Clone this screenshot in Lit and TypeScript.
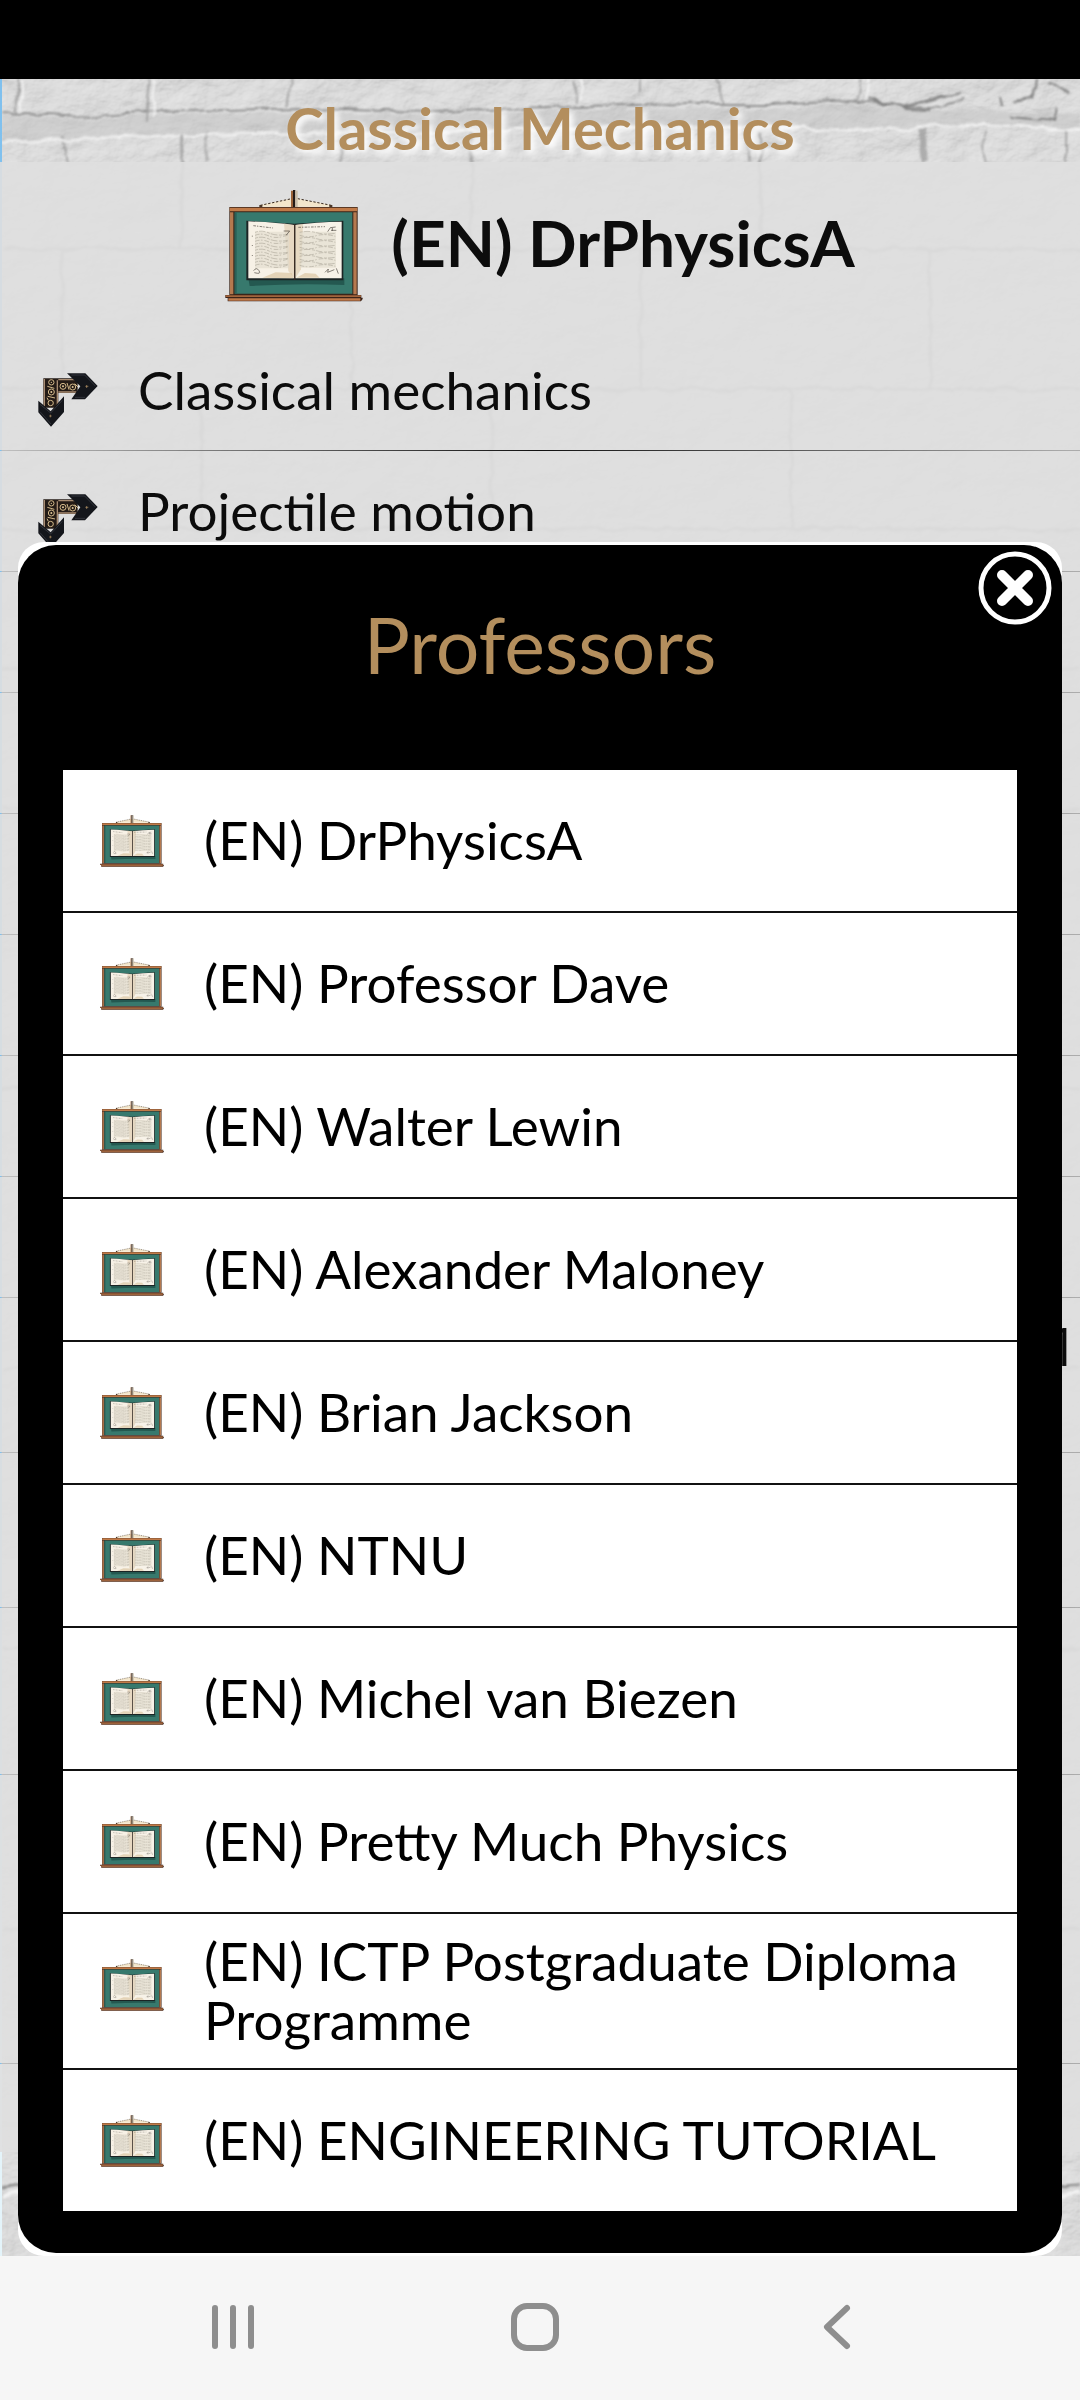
import { LitElement, html, css, svg } from "lit";
import { customElement, property } from "lit/decorators.js";

/** Weathered white brick wall behind the page. */
@customElement("brick-wall")
export class BrickWall extends LitElement {
  static styles = css`
    :host { display: block; overflow: hidden; }
    svg { display: block; width: 100%; height: 100%; }
  `;

  render() {
    return html`<svg viewBox="0 0 1080 2177" preserveAspectRatio="none" aria-hidden="true">
      <defs>
        <filter id="plaster" x="0" y="0" width="100%" height="100%">
          <feTurbulence type="fractalNoise" baseFrequency="0.022 0.03" numOctaves="5" seed="7" result="n" />
          <feDiffuseLighting in="n" surfaceScale="3" diffuseConstant="1.1" lighting-color="#dadada">
            <feDistantLight azimuth="235" elevation="66" />
          </feDiffuseLighting>
        </filter>
        <filter id="rough" x="-2%" y="-2%" width="104%" height="104%">
          <feTurbulence type="fractalNoise" baseFrequency="0.05" numOctaves="4" seed="3" />
          <feDisplacementMap in="SourceGraphic" scale="8" xChannelSelector="R" yChannelSelector="G" />
          <feGaussianBlur stdDeviation="0.8" />
        </filter>
      </defs>
      <rect width="1080" height="2177" fill="#d6d6d6" />
      <rect width="1080" height="2177" filter="url(#plaster)" />
      <g filter="url(#rough)" fill="none">
        <path d="M0 36 85 41 150 36 300 33 430 36 580 31 690 30 770 30 850 25 905 30 960 30 1080 34V52L980 44 870 49 780 48 600 46 430 52 240 52 120 56 0 62Z" fill="#bcbcbc" opacity=".4" />
        <path d="M0 34 85 38 150 33 300 29 430 32 580 27 690 25 770 25 850 21 905 27 930 28 965 20" stroke="#808080" stroke-width="2" opacity=".8" />
        <path d="M868 20 905 29 930 30M905 27 960 13M1036 0 1032 19 1012 22M1010 38 1055 42 1058 28M1000 18 1002 27M1048 6 1070 14" stroke="#6c6c6c" stroke-width="2" opacity=".8" />
        <path d="M16 0V34M148 0 144 42M290 0 286 27M570 0 576 24M640 0V12M716 0 722 24M860 0 857 22M60 56 65 83M205 52V83M340 60V83M745 55 750 83M985 50V83M1066 52V83" stroke="#929292" stroke-width="2" opacity=".7" />
        <path d="M922 48 925 83" stroke="#8d8d8d" stroke-width="7" opacity=".6" />
        <path d="M0 64 120 58 240 55 430 54 600 48 780 49 870 52 980 44 1080 52M20 0V32M152 0V38M868 0 866 20M580 0V22" stroke="#f2f2f2" stroke-width="2" />
        <path d="M0 170H1080M0 310H1080M0 450H1080M0 590H1080M0 730H1080M0 1010H1080M0 1290H1080M0 1570H1080M0 1850H1080M180 55V170M470 55V170M760 55V170M60 170V310M350 170V310M640 170V310M930 170V310M200 310V450M490 310V450M790 310V450" stroke="#858585" stroke-width="3" opacity=".6" />
        <path d="M0 2110 30 2104M1058 2108 1080 2106" stroke="#8a8a8a" stroke-width="3" />
        <path d="M0 2118 30 2112M1058 2118 1080 2114" stroke="#f2f2f2" stroke-width="4" />
      </g>
    </svg>`;
  }
}

/** Chalkboard with an open notebook hung on it. */
@customElement("board-icon")
export class BoardIcon extends LitElement {
  static styles = css`
    :host { display: block; flex: none; width: 64px; height: 52px; }
    :host([large]) { width: 138px; height: 112px; }
    svg { display: block; width: 100%; height: 100%; }
  `;

  @property({ type: Boolean, reflect: true }) large = false;

  render() {
    const rows = [0, 1, 2, 3, 4, 5, 6, 7, 8, 9, 10, 11];
    return html`<svg viewBox="78 57 414 336" aria-hidden="true">
      <path d="M184 107V102L278 83H296L397 102V107Z" fill="#f3e6cb" />
      <path d="M184 103 278 83M296 83 397 103" fill="none" stroke="#37291f" stroke-width="3" stroke-dasharray="7 5" />
      <path d="M181 102h9v6h-9zM391 102h9v6h-9z" fill="#4b382a" />
      <path d="M276 59h6v50h-6z" fill="#9a6238" />
      <path d="M282 57h7v52h-7z" fill="#221a17" />
      <path d="M289 59h7v50h-7z" fill="#c9bda9" />
      <path d="M91 108H476V372H91Z" fill="#3a2419" />
      <path d="M92 110H475V121H92Z" fill="#c07a48" />
      <path d="M93 124h10V370H93zM463 124h10V370H463z" fill="#b5794f" />
      <path d="M107 124H460V368H107Z" fill="#37796d" />
      <path d="M107 124h6V368h-6z" fill="#2a6057" />
      <path d="M148 322H436V342Q300 336 152 345Z" fill="#245850" />
      <path d="M142 149 286 158 433 149V328H142Z" fill="#1b2424" />
      <path d="M148 151Q230 154 285 162V322H148Z" fill="#f7f1e6" />
      <path d="M289 162Q350 153 428 152V322H289Z" fill="#f7f2e8" />
      <path d="M255 158 285 162V322L268 300Z" fill="#dcc8aa" opacity=".6" />
      <path d="M289 162 312 159 306 295 289 322Z" fill="#e0ceb2" opacity=".7" />
      <path d="M190 320 230 304 278 306 283 322ZM292 320 318 306 350 308 362 320Z" fill="#dcc6a3" opacity=".7" />
      <path d="M168 182H270V292H168ZM302 182H411V290H302Z" fill="#e0dacb" opacity=".6" />
      <path d="M285 160h4V326h-4z" fill="#3a2c24" />
      <g fill="none" stroke="#8d8779" stroke-width="2" opacity=".6">
        ${rows.map((i) => svg`<path d=${`M168 ${184 + i * 9}q20 -8 42 2t56 ${i % 2 ? -3 : 4}M302 ${184 + i * 9}q26 ${i % 2 ? 8 : -6} 50 1t57 2`} stroke-dasharray=${i % 2 ? "14 4 5 6" : "9 3 20 5"} />`)}
      </g>
      <g fill="none" stroke="#4a443d" stroke-width="2">
        <path d="M163 164 222 171M298 169 378 167" stroke-dasharray="8 3 4 4" />
        <path d="M254 180 272 180 262 192M386 182 394 170 410 168M396 178H412M400 171V180" />
        <path d="M164 299q8 -12 16 0t-14 6M378 304 388 294 386 304 406 296M412 292 418 308M160 194v3M160 222v3M160 252v3" />
      </g>
      <path d="M79 372H487V380H491V384L486 391H86V381H79Z" fill="#3b2318" />
      <path d="M80 373H486V378H80Z" fill="#a2643b" />
      <path d="M88 382H484V389H88Z" fill="#c07a4a" />
    </svg>`;
  }
}

/** Ornamented arrow that turns right and down. */
@customElement("turn-arrow-icon")
export class TurnArrowIcon extends LitElement {
  static styles = css`
    :host { display: block; flex: none; width: 60px; height: 54px; }
    svg { display: block; width: 100%; height: 100%; }
  `;

  render() {
    return html`<svg viewBox="53 38 180 162" aria-hidden="true">
      <path d="M69 54H172V98H114V142H69Z" fill="#241b16" />
      <path d="M72 56V138M111 60V138M114 58H168M114 95H168" fill="none" stroke="#a88c72" stroke-width="4" />
      <g fill="none" stroke="#d3b98a" stroke-width="3">
        <circle cx="93" cy="66" r="8" /><circle cx="93" cy="95" r="9" /><circle cx="91" cy="128" r="8" />
        <circle cx="128" cy="78" r="9" /><circle cx="157" cy="80" r="9" />
        <path d="M81 78 102 84M82 108 104 113M84 120 80 112M140 68 146 88M163 70 173 80" />
      </g>
      <g fill="#e0c799"><circle cx="93" cy="66" r="2" /><circle cx="93" cy="95" r="3" /><circle cx="128" cy="78" r="3" /><circle cx="157" cy="80" r="3" /></g>
      <path d="M140 39H195L232 77 194 117H153L180 78Z" fill="#14161b" />
      <path d="M153 44H193L225 77M194 111H164" fill="none" stroke="#41444b" stroke-width="2" />
      <path d="M54 121 91 153 131 108V155L92 199 54 156Z" fill="#14161b" />
      <path d="M59 132 91 158 126 120M59 154 92 191" fill="none" stroke="#41444b" stroke-width="2" />
      <path d="M195 78h9M199 74v9M87 167h7M90 163v8" stroke="#b99768" stroke-width="2" />
    </svg>`;
  }
}

interface Lesson {
  label: string;
  size: "single" | "double" | "tall" | "long" | "rest";
  clipped?: boolean;
}

const LESSONS: Lesson[] = [
  { label: "Classical mechanics", size: "single" },
  { label: "Projectile motion", size: "single" },
  { label: "", size: "single" },
  { label: "", size: "single" },
  { label: "", size: "single" },
  { label: "", size: "single" },
  { label: "", size: "single" },
  { label: "", size: "single" },
  { label: "1", size: "double", clipped: true },
  { label: "", size: "double" },
  { label: "", size: "tall" },
  { label: "", size: "long" },
  { label: "", size: "rest" },
];

const PROFESSORS = [
  "(EN) DrPhysicsA",
  "(EN) Professor Dave",
  "(EN) Walter Lewin",
  "(EN) Alexander Maloney",
  "(EN) Brian Jackson",
  "(EN) NTNU",
  "(EN) Michel van Biezen",
  "(EN) Pretty Much Physics",
  "(EN) ICTP Postgraduate Diploma Programme",
  "(EN) ENGINEERING TUTORIAL",
];

@customElement("app-root")
export class AppRoot extends LitElement {
  static styles = css`
    :host {
      display: flex;
      flex-direction: column;
      min-height: 100vh;
      font-family: Lato, "Open Sans", sans-serif;
      color: #0c0c0c;
    }
    * { box-sizing: border-box; }
    h1, h2, ul { margin: 0; padding: 0; }
    ul { list-style: none; }
    button {
      margin: 0;
      padding: 0;
      border: 0;
      background: none;
      color: inherit;
      font: inherit;
      text-align: left;
      cursor: pointer;
    }
    .status { height: 79px; background: #000; }
    .stage {
      position: relative;
      flex: 1;
      display: flex;
      flex-direction: column;
      overflow: hidden;
    }
    .wall {
      position: absolute;
      inset: 0;
      border-left: 2px solid;
      border-image: linear-gradient(#7fc0ee, #8ccaf0 60%, #e4f4fa 95%) 1;
    }
    .header {
      position: relative;
      height: 83px;
      padding-top: 14px;
      text-align: center;
      font-size: 58px;
      line-height: 70px;
      font-weight: 700;
      color: #b38e5d;
      text-shadow: 4px 4px 6px #fff;
    }
    .content { position: relative; background: rgba(223, 223, 223, 0.9); }
    .professor {
      display: flex;
      align-items: center;
      justify-content: center;
      gap: 28px;
      height: 168px;
      font-size: 64px;
      line-height: 74px;
      font-weight: 700;
    }
    .professor span { padding-bottom: 6px; }
    .lesson-row {
      border-bottom: 1px solid;
      border-image: linear-gradient(90deg, #7fc0ee 2px, rgba(60, 60, 60, 0.2) 3px, #111 50%, rgba(60, 60, 60, 0.3)) 1;
    }
    .lesson-row:last-child { border-bottom: 0; }
    .lesson {
      display: flex;
      align-items: center;
      gap: 40px;
      width: 100%;
      min-height: 120px;
      padding: 0 2px 2px 38px;
      font-size: 53px;
      line-height: 59px;
    }
    .double { min-height: 154px; padding-bottom: 59px; }
    .tall { min-height: 166px; }
    .long { min-height: 288px; }
    .rest { min-height: 88px; }
    .clipped { justify-content: flex-end; font-family: "Open Sans", sans-serif; }
    .lesson turn-arrow-icon { margin-top: 22px; }
    .dialog {
      position: absolute;
      left: 18px;
      right: 18px;
      bottom: 0;
      padding: 3px 0;
      border-radius: 26px;
      background: #fff;
      color: #000;
    }
    .panel {
      position: relative;
      padding: 0 45px 42px;
      border-radius: 38px;
      background: #000;
    }
    .title {
      height: 225px;
      padding-top: 56px;
      text-align: center;
      font-size: 77px;
      line-height: 86px;
      font-weight: 400;
      color: #b38e5d;
    }
    .close { position: absolute; top: 6px; right: 9px; width: 75px; height: 75px; }
    .close svg { display: block; width: 100%; height: 100%; }
    .choice + .choice { border-top: 2px solid #111; }
    .choice { background: #fff; }
    .pick {
      display: flex;
      align-items: center;
      gap: 40px;
      width: 100%;
      min-height: 141px;
      padding: 17px 37px 19px;
      font-size: 53px;
      line-height: 59px;
    }
    .pick board-icon { align-self: flex-start; margin-top: 28px; }
    .nav {
      display: grid;
      grid-template-columns: repeat(3, 1fr);
      justify-items: center;
      align-items: center;
      height: 144px;
      padding: 0 92px 0 82px;
      background: #f6f6f6;
    }
    .nav svg { display: block; width: 54px; height: 54px; }
  `;

  render() {
    return html`
      <div class="status"></div>
      <main class="stage">
        <brick-wall class="wall"></brick-wall>
        <h1 class="header">Classical Mechanics</h1>
        <section class="content">
          <h2 class="professor"><board-icon large></board-icon><span>(EN) DrPhysicsA</span></h2>
          <ul>
            ${LESSONS.map(
              (l) => html`<li class="lesson-row">
                ${l.label && !l.clipped
                  ? html`<button class="lesson"><turn-arrow-icon></turn-arrow-icon>${l.label}</button>`
                  : html`<div class="lesson ${l.size} ${l.clipped ? "clipped" : ""}">${l.label}</div>`}
              </li>`
            )}
          </ul>
        </section>
        <section class="dialog" role="dialog" aria-labelledby="dialog-title">
          <div class="panel">
            <h2 class="title" id="dialog-title">Professors</h2>
            <button class="close" aria-label="Close">
              <svg viewBox="0 0 75 75" fill="none" stroke="#fff">
                <circle cx="37" cy="37" r="34" stroke-width="5" />
                <path d="M24 24 50 50M50 24 24 50" stroke-width="10" stroke-linecap="round" />
              </svg>
            </button>
            <ul>
              ${PROFESSORS.map(
                (name) => html`<li class="choice">
                  <button class="pick"><board-icon></board-icon><span>${name}</span></button>
                </li>`
              )}
            </ul>
          </div>
        </section>
      </main>
      <nav class="nav" aria-label="System">
        <button aria-label="Recent apps">
          <svg viewBox="0 0 54 54" stroke="#8e8e8e" stroke-width="6" stroke-linecap="round">
            <path d="M9 7V45M27 7V45M45 7V45" />
          </svg>
        </button>
        <button aria-label="Home">
          <svg viewBox="0 0 54 54" fill="none" stroke="#8e8e8e" stroke-width="6">
            <rect x="6" y="5" width="42" height="42" rx="13" />
          </svg>
        </button>
        <button aria-label="Back">
          <svg viewBox="0 0 54 54" fill="none" stroke="#8e8e8e" stroke-width="6" stroke-linecap="round" stroke-linejoin="round">
            <path d="M37 7 17 26 37 45" />
          </svg>
        </button>
      </nav>
    `;
  }
}
